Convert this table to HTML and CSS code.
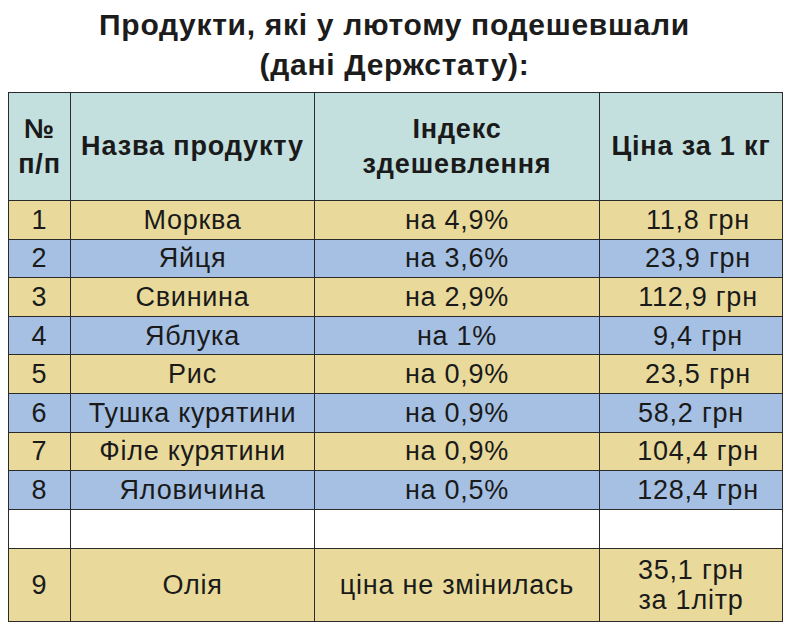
FILE: index.html
```html
<!DOCTYPE html>
<html lang="uk">
<head>
<meta charset="utf-8">
<title>Продукти, які у лютому подешевшали</title>
<link rel="stylesheet" href="styles.css">
</head>
<body>
<h1 class="title">Продукти, які у лютому подешевшали<br>(дані Держстату):</h1>
<table class="prices">
  <colgroup>
    <col class="c-num"><col class="c-name"><col class="c-idx"><col class="c-price">
  </colgroup>
  <thead>
    <tr class="head">
      <th>№<br>п/п</th>
      <th>Назва продукту</th>
      <th>Індекс<br>здешевлення</th>
      <th>Ціна за 1 кг</th>
    </tr>
  </thead>
  <tbody>
    <tr class="yellow"><td>1</td><td>Морква</td><td>на 4,9%</td><td class="price">11,8 грн</td></tr>
    <tr class="blue"><td>2</td><td>Яйця</td><td>на 3,6%</td><td class="price">23,9 грн</td></tr>
    <tr class="yellow"><td>3</td><td>Свинина</td><td>на 2,9%</td><td class="price">112,9 грн</td></tr>
    <tr class="blue"><td>4</td><td>Яблука</td><td>на 1%</td><td class="price">9,4 грн</td></tr>
    <tr class="yellow"><td>5</td><td>Рис</td><td>на 0,9%</td><td class="price">23,5 грн</td></tr>
    <tr class="blue"><td>6</td><td>Тушка курятини</td><td>на 0,9%</td><td class="price price-left">58,2 грн</td></tr>
    <tr class="yellow"><td>7</td><td>Філе курятини</td><td>на 0,9%</td><td class="price">104,4 грн</td></tr>
    <tr class="blue"><td>8</td><td>Яловичина</td><td>на 0,5%</td><td class="price">128,4 грн</td></tr>
    <tr class="empty"><td></td><td></td><td></td><td></td></tr>
    <tr class="yellow tall"><td>9</td><td>Олія</td><td>ціна не змінилась</td><td class="price-multi">35,1 грн<br>за 1літр</td></tr>
  </tbody>
</table>
</body>
</html>
```

FILE: styles.css
```css
html, body {
  margin: 0;
  padding: 0;
  background: #ffffff;
}

body {
  width: 800px;
  font-family: "Liberation Sans", Arial, sans-serif;
  color: #1a1a1a;
}

.title {
  margin: 5px 0 7px 0;
  width: 789px;
  text-align: center;
  font-size: 30px;
  line-height: 40px;
  letter-spacing: 0.7px;
  font-weight: bold;
  color: #1c1c1c;
}

.prices {
  margin-left: 8px;
  border-collapse: collapse;
  table-layout: fixed;
  width: 774px;
  font-size: 27px;
  letter-spacing: 0.75px;
}

.c-num { width: 62px; }
.c-name { width: 244px; }
.c-idx { width: 285px; }
.c-price { width: 183px; }

.prices th,
.prices td {
  border: 1.5px solid #2b2b2b;
  padding: 0;
  text-align: center;
  vertical-align: middle;
}

.head {
  height: 108px;
  background: #c3dfde;
}

.head th {
  font-weight: bold;
  font-size: 27px;
  line-height: 35px;
  letter-spacing: 0.85px;
}

.prices tbody tr {
  height: 38.6px;
}

.prices td {
  line-height: 30px;
}

.yellow { background: #e9da9c; }
.blue { background: #a5c0e2; }
.empty { background: #ffffff; }

.prices tbody tr.empty { height: 39px; }
.prices tbody tr.tall { height: 73px; }

.prices td.price { padding-left: 14px; }
.prices td.price-left { padding-left: 0; }

.price-multi { line-height: 31px; }
```
